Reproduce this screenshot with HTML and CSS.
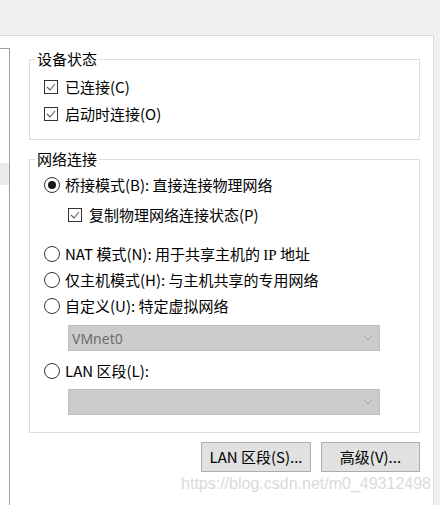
FILE: index.html
```html
<!DOCTYPE html>
<html>
<head>
<meta charset="utf-8">
<link rel="stylesheet" href="styles.css">
</head>
<body>
<div class="top"></div>
<div class="panel">
  <div class="list"><div class="sel"></div></div>
  <div class="main">
    <fieldset class="group g1">
      <legend>设备状态</legend>
      <div class="row first">
        <span class="cb"><svg width="12" height="12" viewBox="0 0 12 12"><polyline points="2,6 5,9 10,3" fill="none" stroke="#5a5a5a" stroke-width="1.1"/></svg></span>
        <span>已连接(C)</span>
      </div>
      <div class="row">
        <span class="cb"><svg width="12" height="12" viewBox="0 0 12 12"><polyline points="2,6 5,9 10,3" fill="none" stroke="#5a5a5a" stroke-width="1.1"/></svg></span>
        <span>启动时连接(O)</span>
      </div>
    </fieldset>
    <fieldset class="group g2">
      <legend>网络连接</legend>
      <div class="rrow first">
        <span class="radio on"></span>
        <span>桥接模式(B): 直接连接物理网络</span>
      </div>
      <div class="rrow sub">
        <span class="cb"><svg width="12" height="12" viewBox="0 0 12 12"><polyline points="2,6 5,9 10,3" fill="none" stroke="#5a5a5a" stroke-width="1.1"/></svg></span>
        <span>复制物理网络连接状态(P)</span>
      </div>
      <div class="rrow nat">
        <span class="radio"></span>
        <span>NAT 模式(N): 用于共享主机的 <span class="serif">IP</span> 地址</span>
      </div>
      <div class="rrow">
        <span class="radio"></span>
        <span>仅主机模式(H): 与主机共享的专用网络</span>
      </div>
      <div class="rrow">
        <span class="radio"></span>
        <span>自定义(U): 特定虚拟网络</span>
      </div>
      <div class="select s1">
        <span class="sval">VMnet0</span>
        <svg class="chev" width="10" height="6" viewBox="0 0 10 6"><polyline points="0.5,0.5 5,5 9.5,0.5" fill="none" stroke="#a8a8a8" stroke-width="1"/></svg>
      </div>
      <div class="rrow lan">
        <span class="radio"></span>
        <span>LAN 区段(L):</span>
      </div>
      <div class="select s2">
        <span class="sval"></span>
        <svg class="chev" width="10" height="6" viewBox="0 0 10 6"><polyline points="0.5,0.5 5,5 9.5,0.5" fill="none" stroke="#a8a8a8" stroke-width="1"/></svg>
      </div>
    </fieldset>
    <div class="buttons">
      <div class="btn b1">LAN 区段(S)...</div>
      <div class="btn b2">高级(V)...</div>
    </div>
    <div class="wm">https://blog.csdn.net/m0_49312498</div>
  </div>
</div>
</body>
</html>
```
FILE: styles.css
```css
html, body {
  margin: 0;
  padding: 0;
}
body {
  background: #f0f0f0;
  width: 440px;
  height: 505px;
  overflow: hidden;
  font-family: "Noto Sans CJK SC", "Noto Sans", sans-serif;
  font-size: 15px;
  color: #000;
}
.top {
  height: 35px;
}
.panel {
  display: flex;
  width: 433px;
  height: 469px;
  background: #fff;
  border-top: 1px solid #d9d9d9;
  border-right: 1px solid #d9d9d9;
}
.list {
  width: 9px;
  margin-top: 12px;
  border-top: 1px solid #a0a0a0;
  border-right: 1px solid #a0a0a0;
}
.sel {
  margin-top: 114px;
  height: 22px;
  background: #ebebeb;
}
.main {
  margin-left: 19px;
  width: 391px;
  display: flex;
  flex-direction: column;
}
.group {
  margin: 0;
  padding: 0;
  border: 1px solid #dcdcdc;
  min-width: 0;
}
.group legend {
  margin-left: 5px;
  padding: 0 2px;
  line-height: 20px;
  height: 20px;
}
.g1 {
  margin-top: 13px;
  padding-bottom: 12px;
}
.g2 {
  margin-top: 9px;
  padding-bottom: 17px;
}
.row {
  display: flex;
  align-items: center;
  height: 27px;
  padding-left: 14px;
  line-height: 20px;
}
.row.first {
  margin-top: 4px;
}
.rrow {
  display: flex;
  align-items: center;
  height: 26px;
  padding-left: 14px;
  line-height: 20px;
}
.rrow.first {
  margin-top: 3px;
}
.rrow.sub {
  margin-top: 4px;
  padding-left: 38px;
}
.rrow.nat {
  margin-top: 13px;
}
.rrow.lan {
  margin-top: 7px;
}
.cb {
  width: 14px;
  height: 14px;
  box-sizing: border-box;
  border: 1px solid #333;
  margin-right: 7px;
  display: flex;
  align-items: center;
  justify-content: center;
  flex: none;
}
.cb svg {
  display: block;
}
.radio {
  width: 16px;
  height: 16px;
  box-sizing: border-box;
  border: 1px solid #333;
  border-radius: 50%;
  margin-right: 5px;
  display: flex;
  align-items: center;
  justify-content: center;
  flex: none;
}
.radio.on::after {
  content: "";
  width: 8px;
  height: 8px;
  border-radius: 50%;
  background: #1a1a1a;
}
.serif {
  font-family: "Liberation Serif", serif;
}
.select {
  margin-left: 38px;
  width: 312px;
  height: 26px;
  box-sizing: border-box;
  background: #cccccc;
  border: 1px solid #bfbfbf;
  display: flex;
  align-items: center;
  justify-content: space-between;
  padding: 0 6px 0 3px;
}
.s1 {
  margin-top: 6px;
}
.s2 {
  margin-top: 5px;
}
.sval {
  font-family: "Noto Sans", sans-serif;
  font-size: 14px;
  color: #6d6d6d;
}
.chev {
  display: block;
}
.buttons {
  display: flex;
  justify-content: flex-end;
  gap: 10px;
  margin-top: 9px;
}
.btn {
  height: 30px;
  box-sizing: border-box;
  background: #e1e1e1;
  border: 1px solid #adadad;
  display: flex;
  align-items: center;
  justify-content: center;
  line-height: 20px;
}
.b1 {
  width: 110px;
}
.b2 {
  width: 99px;
}
.wm {
  margin-top: 2px;
  margin-right: -11px;
  text-align: right;
  font-family: "Liberation Sans", Arial, sans-serif;
  font-size: 16px;
  line-height: 20px;
  color: #dadada;
  white-space: nowrap;
}
```
